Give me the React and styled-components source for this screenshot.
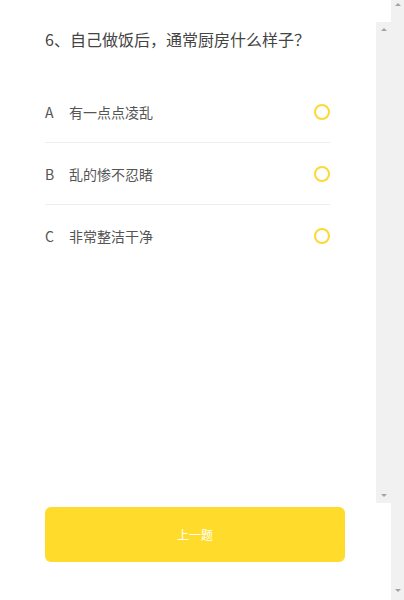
import React, { useState } from "react";
import styled, { createGlobalStyle } from "styled-components";

const GlobalStyle = createGlobalStyle`
  body {
    margin: 0;
    background: #fff;
    font-family: "Noto Sans CJK SC", "Noto Sans", sans-serif;
  }
`;

const Page = styled.div`
  height: 600px;
  display: flex;
  overflow: hidden;
`;

const Main = styled.div`
  width: 391px;
  display: flex;
  flex-direction: column;
`;

// the grey scrollbar tracks from the screenshot
const Track = styled.div`
  width: ${(p) => p.width}px;
  flex-shrink: 0;
  background: #f1f1f1;
  display: flex;
  flex-direction: column;
  justify-content: space-between;
  align-items: center;
`;

const Arrow = styled.span`
  width: 0;
  height: 0;
  margin: ${(p) => p.margin};
  border-left: 3px solid transparent;
  border-right: 3px solid transparent;
  border-${(p) => (p.down ? "top" : "bottom")}: 3px solid #a3a3a3;
`;

const Panel = styled.div`
  margin-top: 22px;
  height: 481px;
  display: flex;
`;

const Content = styled.div`
  width: 376px;
  box-sizing: border-box;
  padding: 0 46px 0 45px;
  overflow: hidden;
`;

const Title = styled.h2`
  margin: 0;
  padding-top: 5px;
  font-size: 16px;
  line-height: 24px;
  font-weight: 400;
  color: #444;
`;

const Options = styled.ul`
  list-style: none;
  margin: 30px 0 0;
  padding: 0;
`;

const Option = styled.li`
  height: 61px;
  display: flex;
  align-items: center;
  border-bottom: 1px solid ${(p) => (p.$last ? "transparent" : "#eeeeee")};
  cursor: pointer;
`;

const Letter = styled.span`
  width: 24px;
  font-size: 14px;
  color: #555;
`;

const Label = styled.span`
  flex: 1;
  font-size: 14px;
  color: #555;
`;

const Radio = styled.span`
  width: 12px;
  height: 12px;
  border-radius: 50%;
  border: 2.5px solid #fcd935;
  background: ${(p) => (p.$checked ? "#fcd935" : "transparent")};
`;

const PrevButton = styled.button`
  margin: 4px 0 0 45px;
  width: 300px;
  height: 55px;
  border: none;
  border-radius: 6px;
  background: #ffdc2c;
  color: #fff;
  font-family: inherit;
  font-size: 12px;
  cursor: pointer;
`;

const options = [
  { key: "A", text: "有一点点凌乱" },
  { key: "B", text: "乱的惨不忍睹" },
  { key: "C", text: "非常整洁干净" },
];

const App = () => {
  const [picked, setPicked] = useState(null);

  return (
    <Page>
      <GlobalStyle />
      <Main>
        <Panel>
          <Content>
            <Title>6、自己做饭后，通常厨房什么样子？</Title>
            <Options>
              {options.map((o, i) => (
                <Option
                  key={o.key}
                  $last={i === options.length - 1}
                  onClick={() => setPicked(o.key)}
                >
                  <Letter>{o.key}</Letter>
                  <Label>{o.text}</Label>
                  <Radio $checked={picked === o.key} />
                </Option>
              ))}
            </Options>
          </Content>
          <Track width={15}>
            <Arrow margin="6px 0 0" />
            <Arrow down margin="0 0 6px" />
          </Track>
        </Panel>
        <PrevButton>上一题</PrevButton>
      </Main>
      <Track width={13}>
        <Arrow margin="3px 0 0" />
        <Arrow down margin="0 0 8px" />
      </Track>
    </Page>
  );
};

export default App;
